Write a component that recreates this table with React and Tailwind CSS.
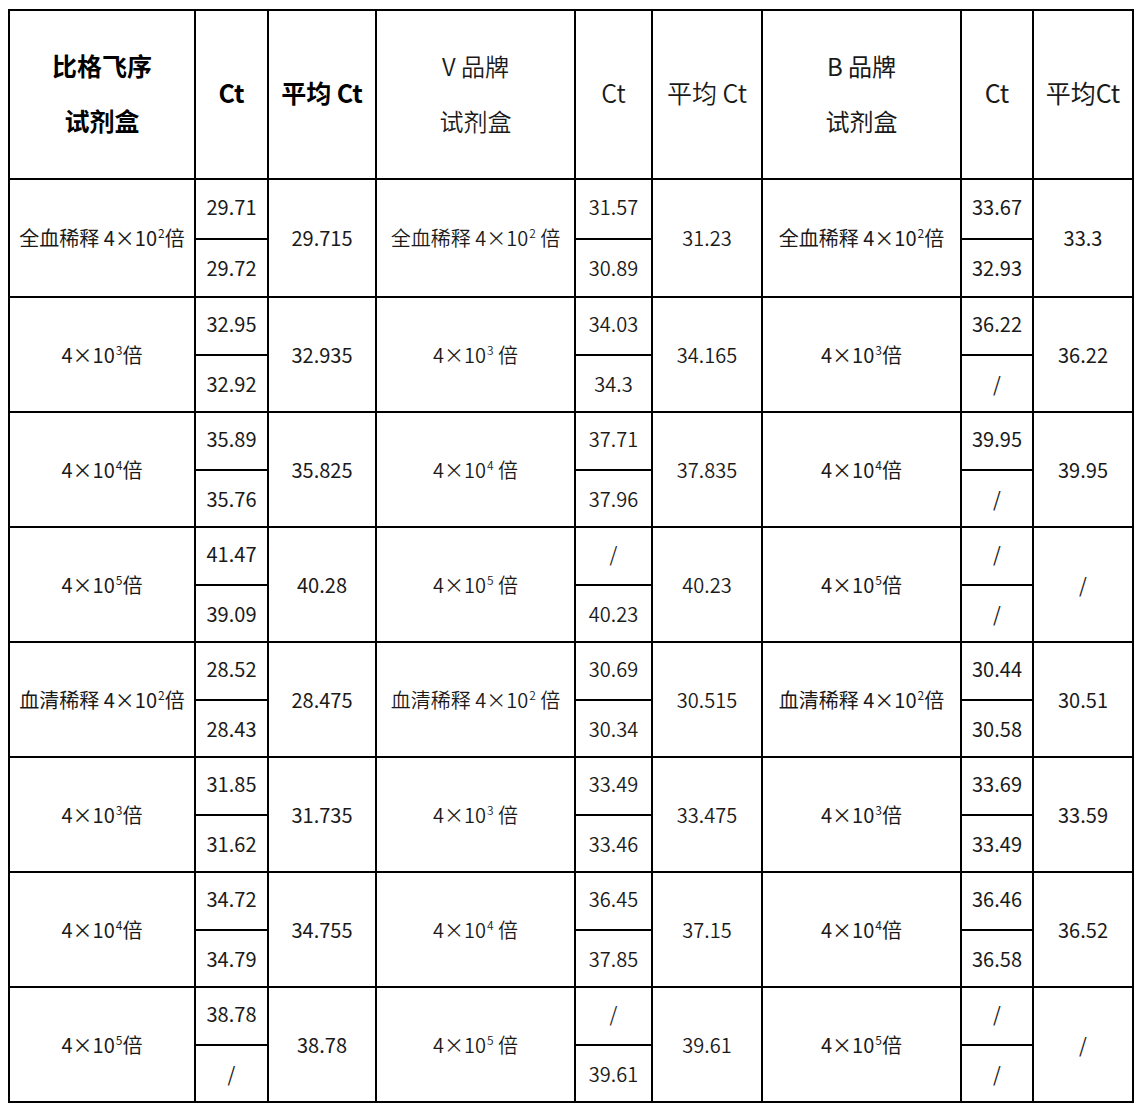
import React from 'react';

const font = { fontFamily: '"Noto Sans CJK SC", "Noto Sans", sans-serif' };

// dilution label: prefix, exponent, optional gap before 倍
function Dilution({ prefix, exp, gap }) {
    return (
        <span className="whitespace-nowrap">
            {prefix}4×10<sup className="text-[12px] relative -top-[8px] ml-[1px]">{exp}</sup>{gap ? ' ' : ''}倍
        </span>
    );
}

const groups = [
    { prefix: '全血稀释 ', exp: '2', a: ['29.71', '29.72', '29.715'], v: ['31.57', '30.89', '31.23'], b: ['33.67', '32.93', '33.3'] },
    { prefix: '', exp: '3', a: ['32.95', '32.92', '32.935'], v: ['34.03', '34.3', '34.165'], b: ['36.22', '/', '36.22'] },
    { prefix: '', exp: '4', a: ['35.89', '35.76', '35.825'], v: ['37.71', '37.96', '37.835'], b: ['39.95', '/', '39.95'] },
    { prefix: '', exp: '5', a: ['41.47', '39.09', '40.28'], v: ['/', '40.23', '40.23'], b: ['/', '/', '/'] },
    { prefix: '血清稀释 ', exp: '2', a: ['28.52', '28.43', '28.475'], v: ['30.69', '30.34', '30.515'], b: ['30.44', '30.58', '30.51'] },
    { prefix: '', exp: '3', a: ['31.85', '31.62', '31.735'], v: ['33.49', '33.46', '33.475'], b: ['33.69', '33.49', '33.59'] },
    { prefix: '', exp: '4', a: ['34.72', '34.79', '34.755'], v: ['36.45', '37.85', '37.15'], b: ['36.46', '36.58', '36.52'] },
    { prefix: '', exp: '5', a: ['38.78', '/', '38.78'], v: ['/', '39.61', '39.61'], b: ['/', '/', '/'] },
];

const cell = 'bg-white flex items-center justify-center text-center';

export default function App() {
    return (
        <div className="bg-white min-h-[1112px] pl-[8px] pt-[9px]" style={font}>
            <div className="inline-grid bg-black gap-[2px] p-[2px] text-[20px] text-[#1a1a1a] grid-cols-[184px_71px_106px_197px_75px_108px_197px_70px_98px] grid-rows-[167px_58px_56px_repeat(7,56px_55px)]">
                {/* header */}
                <div className={`${cell} flex-col font-bold text-[25px] text-black leading-[55px] pb-[4px]`}>
                    <span>比格飞序</span>
                    <span>试剂盒</span>
                </div>
                <div className={`${cell} font-bold text-[25px] text-black pb-[4px]`}>Ct</div>
                <div className={`${cell} font-bold text-[25px] text-black pb-[4px]`}>平均 Ct</div>
                <div className={`${cell} flex-col font-[350] text-[24px] leading-[55px] pb-[4px]`}>
                    <span>V 品牌</span>
                    <span>试剂盒</span>
                </div>
                <div className={`${cell} font-[350] text-[25px] pb-[4px]`}>Ct</div>
                <div className={`${cell} font-[350] text-[25px] pb-[4px]`}>平均 Ct</div>
                <div className={`${cell} flex-col text-[24px] leading-[55px] pb-[4px]`}>
                    <span>B 品牌</span>
                    <span>试剂盒</span>
                </div>
                <div className={`${cell} text-[25px] pb-[4px]`}>Ct</div>
                <div className={`${cell} text-[25px] pb-[4px]`}>平均Ct</div>

                {groups.map((g, i) => (
                    <React.Fragment key={i}>
                        <div className={`${cell} row-span-2`}><Dilution prefix={g.prefix} exp={g.exp} /></div>
                        <div className={`${cell} pb-[4px]`}>{g.a[0]}</div>
                        <div className={`${cell} row-span-2`}>{g.a[2]}</div>
                        <div className={`${cell} row-span-2 font-[350]`}><Dilution prefix={g.prefix} exp={g.exp} gap /></div>
                        <div className={`${cell} pb-[4px] font-[350]`}>{g.v[0]}</div>
                        <div className={`${cell} row-span-2 font-[350]`}>{g.v[2]}</div>
                        <div className={`${cell} row-span-2`}><Dilution prefix={g.prefix} exp={g.exp} /></div>
                        <div className={`${cell} pb-[4px]`}>{g.b[0]}</div>
                        <div className={`${cell} row-span-2`}>{g.b[2]}</div>
                        {/* second sub-row, auto-placed into cols 2, 5, 8 */}
                        <div className={cell}>{g.a[1]}</div>
                        <div className={`${cell} font-[350]`}>{g.v[1]}</div>
                        <div className={cell}>{g.b[1]}</div>
                    </React.Fragment>
                ))}
            </div>
        </div>
    );
}
